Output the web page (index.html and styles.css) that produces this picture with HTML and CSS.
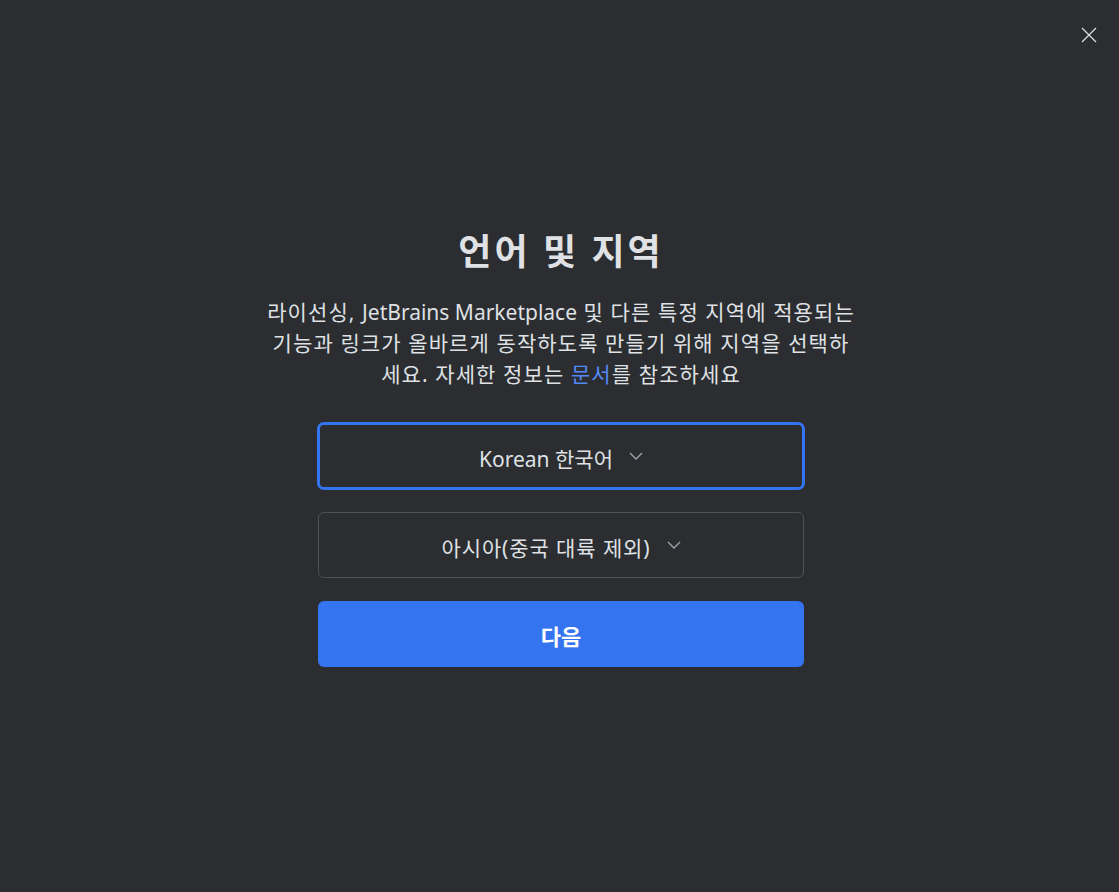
FILE: index.html
```html
<!DOCTYPE html>
<html lang="ko">
<head>
  <meta charset="UTF-8">
  <meta name="viewport" content="width=device-width, initial-scale=1.0">
  <title>언어 및 지역</title>
  <link rel="stylesheet" href="styles.css">
</head>
<body>
  <div class="dialog">
    <button class="close-btn" aria-label="닫기">
      <svg width="16" height="16" viewBox="0 0 16 16">
        <path d="M1 1 L15 15 M15 1 L1 15" stroke="#dfe1e5" stroke-width="1.2" fill="none"/>
      </svg>
    </button>
    <div class="content">
      <h1 class="title">언어 및 지역</h1>
      <p class="desc">라이선싱, <span class="latin">JetBrains Marketplace</span> 및 다른 특정 지역에 적용되는<br>기능과 링크가 올바르게 동작하도록 만들기 위해 지역을 선택하<br>세요. 자세한 정보는 <a href="#" class="link">문서</a>를 참조하세요</p>
      <button class="select focused">
        <span>Korean 한국어</span>
        <svg class="chevron" width="14" height="8" viewBox="0 0 14 8">
          <path d="M1 1 L7 7 L13 1" stroke="#9da0a8" stroke-width="1.4" fill="none"/>
        </svg>
      </button>
      <button class="select">
        <span class="wide">아시아(중국 대륙 제외)</span>
        <svg class="chevron" width="14" height="8" viewBox="0 0 14 8">
          <path d="M1 1 L7 7 L13 1" stroke="#9da0a8" stroke-width="1.4" fill="none"/>
        </svg>
      </button>
      <button class="next-btn">다음</button>
    </div>
  </div>
</body>
</html>
```

FILE: styles.css
```css
html, body {
  margin: 0;
  height: 100%;
}
body {
  background-color: #2b2d30;
  color: #dfe1e5;
  font-family: "Noto Sans", "Noto Sans CJK KR", sans-serif;
}
.dialog {
  position: relative;
  height: 100%;
  display: flex;
  flex-direction: column;
  align-items: center;
}
.close-btn {
  position: absolute;
  top: 27px;
  right: 22px;
  background: none;
  border: none;
  padding: 0;
  width: 16px;
  height: 16px;
  cursor: pointer;
}
.content {
  display: flex;
  flex-direction: column;
  align-items: center;
  width: 488px;
  padding-top: 224px;
  margin-left: 3px;
}
.title {
  margin: 0;
  font-size: 36px;
  font-weight: 700;
  letter-spacing: 3px;
  line-height: 56px;
}
.desc {
  width: 640px;
  margin: 17px 0 0;
  text-align: center;
  font-size: 21px;
  line-height: 31px;
  letter-spacing: 1.1px;
  white-space: nowrap;
}
.latin {
  letter-spacing: 0;
}
.link {
  color: #548af7;
  text-decoration: none;
}
.select {
  display: flex;
  justify-content: center;
  align-items: center;
  gap: 16px;
  box-sizing: border-box;
  flex-shrink: 0;
  width: 486px;
  height: 66px;
  margin-top: 22px;
  background-color: #2b2d30;
  border: 1px solid #4e5157;
  border-radius: 6px;
  color: #dfe1e5;
  font-family: inherit;
  font-size: 21px;
}
.select.focused {
  width: 488px;
  height: 68px;
  margin-top: 32px;
  border: 3px solid #3574f0;
  border-radius: 7px;
}
.select span {
  margin-top: 4px;
}
.select .wide {
  letter-spacing: 0.9px;
}
.chevron {
  margin-top: 0;
}
.next-btn {
  box-sizing: border-box;
  flex-shrink: 0;
  width: 486px;
  height: 66px;
  margin-top: 23px;
  padding-top: 3px;
  background-color: #3574f0;
  border: none;
  border-radius: 6px;
  color: #ffffff;
  font-family: inherit;
  font-size: 22px;
  font-weight: 700;
}
```
